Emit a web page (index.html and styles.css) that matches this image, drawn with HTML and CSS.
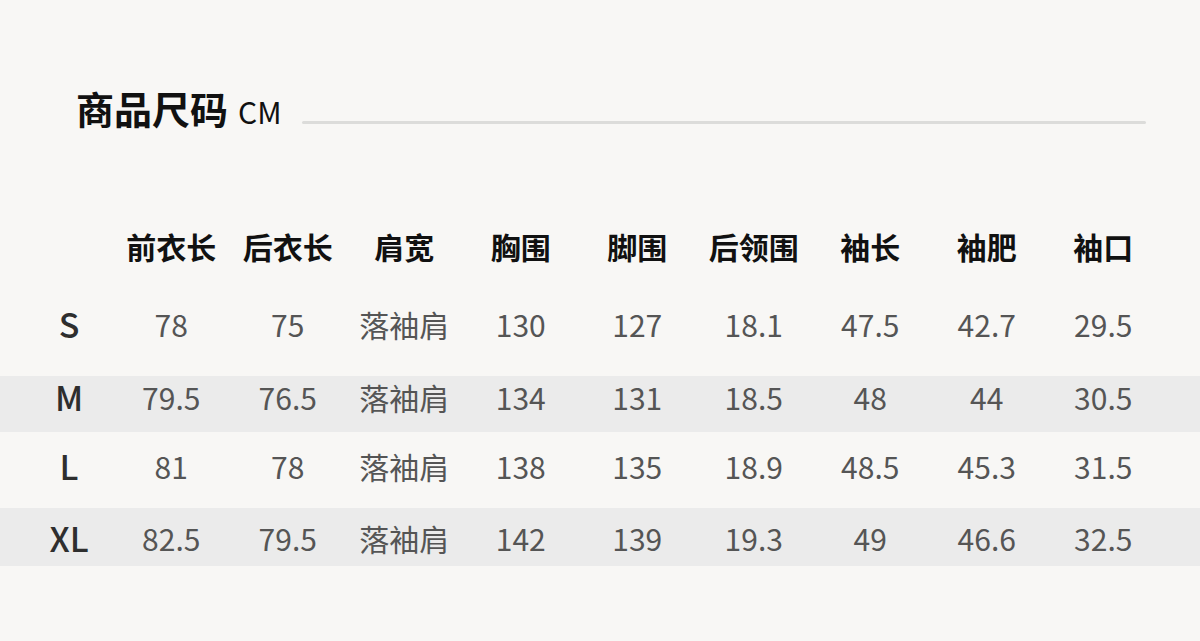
FILE: index.html
```html
<!DOCTYPE html>
<html lang="zh-CN">
<head>
<meta charset="utf-8">
<title>商品尺码</title>
<link rel="stylesheet" href="styles.css">
</head>
<body>
<div class="page">
  <div class="title-row">
    <h1 class="title">商品尺码<span class="unit">CM</span></h1>
    <div class="title-line"></div>
  </div>
  <div class="table">
    <div class="row head">
      <div class="cell"></div>
      <div class="cell">前衣长</div>
      <div class="cell">后衣长</div>
      <div class="cell">肩宽</div>
      <div class="cell">胸围</div>
      <div class="cell">脚围</div>
      <div class="cell">后领围</div>
      <div class="cell">袖长</div>
      <div class="cell">袖肥</div>
      <div class="cell">袖口</div>
    </div>
    <div class="row r-s">
      <div class="cell size">S</div>
      <div class="cell">78</div>
      <div class="cell">75</div>
      <div class="cell">落袖肩</div>
      <div class="cell">130</div>
      <div class="cell">127</div>
      <div class="cell">18.1</div>
      <div class="cell">47.5</div>
      <div class="cell">42.7</div>
      <div class="cell">29.5</div>
    </div>
    <div class="row r-m stripe">
      <div class="cell size">M</div>
      <div class="cell">79.5</div>
      <div class="cell">76.5</div>
      <div class="cell">落袖肩</div>
      <div class="cell">134</div>
      <div class="cell">131</div>
      <div class="cell">18.5</div>
      <div class="cell">48</div>
      <div class="cell">44</div>
      <div class="cell">30.5</div>
    </div>
    <div class="row r-l">
      <div class="cell size">L</div>
      <div class="cell">81</div>
      <div class="cell">78</div>
      <div class="cell">落袖肩</div>
      <div class="cell">138</div>
      <div class="cell">135</div>
      <div class="cell">18.9</div>
      <div class="cell">48.5</div>
      <div class="cell">45.3</div>
      <div class="cell">31.5</div>
    </div>
    <div class="row r-xl stripe">
      <div class="cell size">XL</div>
      <div class="cell">82.5</div>
      <div class="cell">79.5</div>
      <div class="cell">落袖肩</div>
      <div class="cell">142</div>
      <div class="cell">139</div>
      <div class="cell">19.3</div>
      <div class="cell">49</div>
      <div class="cell">46.6</div>
      <div class="cell">32.5</div>
    </div>
  </div>
</div>
</body>
</html>
```

FILE: styles.css
```css
* { box-sizing: border-box; }
html, body {
  margin: 0;
  padding: 0;
  background: #f8f7f5;
}
body {
  width: 1200px;
  height: 641px;
  overflow: hidden;
  font-family: "Noto Sans CJK SC", "Noto Sans", sans-serif;
}
.page {
  padding-top: 89px;
}
.title-row {
  display: flex;
  align-items: baseline;
  padding-left: 76px;
  padding-right: 54px;
}
.title {
  margin: 0;
  font-size: 38px;
  line-height: 1;
  font-weight: 700;
  color: #111;
  white-space: nowrap;
}
.unit {
  font-size: 30px;
  font-weight: 400;
  margin-left: 10px;
  color: #111;
}
.title-line {
  flex: 1;
  height: 3px;
  margin-left: 20px;
  margin-bottom: -1px;
  background: #dcdcda;
  border-radius: 2px;
}
.table {
  margin-top: 88px;
}
.row {
  display: grid;
  grid-template-columns: 88px repeat(9, 116.5px);
  padding-left: 25px;
  align-items: center;
}
.cell {
  text-align: center;
  font-size: 30px;
  line-height: 1;
  color: #555;
  white-space: nowrap;
}
.head {
  height: 67px;
  padding-bottom: 6px;
}
.head .cell {
  font-weight: 700;
  color: #111;
}
.size {
  font-size: 34px;
  font-weight: 500;
  color: #2e2e2e;
}
.stripe {
  background: #ebebeb;
}
.r-s { height: 94px; padding-bottom: 10px; }
.r-m { height: 56px; padding-bottom: 14px; }
.r-l { height: 76px; padding-bottom: 8px; }
.r-xl { height: 58px; padding-top: 2px; }
```
